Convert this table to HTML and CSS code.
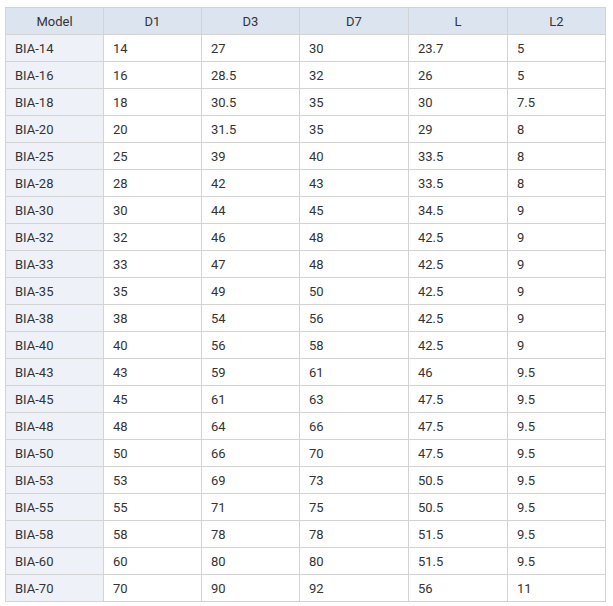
FILE: index.html
```html
<!DOCTYPE html>
<html>
<head>
<meta charset="utf-8">
<link rel="stylesheet" href="styles.css">
</head>
<body>
<table class="spec">
<colgroup>
<col class="c-model"><col class="c-d1"><col class="c-d3"><col class="c-d7"><col class="c-l"><col class="c-l2">
</colgroup>
<thead>
<tr><th>Model</th><th>D1</th><th>D3</th><th>D7</th><th>L</th><th>L2</th></tr>
</thead>
<tbody>
<tr><td>BIA-14</td><td>14</td><td>27</td><td>30</td><td>23.7</td><td>5</td></tr>
<tr><td>BIA-16</td><td>16</td><td>28.5</td><td>32</td><td>26</td><td>5</td></tr>
<tr><td>BIA-18</td><td>18</td><td>30.5</td><td>35</td><td>30</td><td>7.5</td></tr>
<tr><td>BIA-20</td><td>20</td><td>31.5</td><td>35</td><td>29</td><td>8</td></tr>
<tr><td>BIA-25</td><td>25</td><td>39</td><td>40</td><td>33.5</td><td>8</td></tr>
<tr><td>BIA-28</td><td>28</td><td>42</td><td>43</td><td>33.5</td><td>8</td></tr>
<tr><td>BIA-30</td><td>30</td><td>44</td><td>45</td><td>34.5</td><td>9</td></tr>
<tr><td>BIA-32</td><td>32</td><td>46</td><td>48</td><td>42.5</td><td>9</td></tr>
<tr><td>BIA-33</td><td>33</td><td>47</td><td>48</td><td>42.5</td><td>9</td></tr>
<tr><td>BIA-35</td><td>35</td><td>49</td><td>50</td><td>42.5</td><td>9</td></tr>
<tr><td>BIA-38</td><td>38</td><td>54</td><td>56</td><td>42.5</td><td>9</td></tr>
<tr><td>BIA-40</td><td>40</td><td>56</td><td>58</td><td>42.5</td><td>9</td></tr>
<tr><td>BIA-43</td><td>43</td><td>59</td><td>61</td><td>46</td><td>9.5</td></tr>
<tr><td>BIA-45</td><td>45</td><td>61</td><td>63</td><td>47.5</td><td>9.5</td></tr>
<tr><td>BIA-48</td><td>48</td><td>64</td><td>66</td><td>47.5</td><td>9.5</td></tr>
<tr><td>BIA-50</td><td>50</td><td>66</td><td>70</td><td>47.5</td><td>9.5</td></tr>
<tr><td>BIA-53</td><td>53</td><td>69</td><td>73</td><td>50.5</td><td>9.5</td></tr>
<tr><td>BIA-55</td><td>55</td><td>71</td><td>75</td><td>50.5</td><td>9.5</td></tr>
<tr><td>BIA-58</td><td>58</td><td>78</td><td>78</td><td>51.5</td><td>9.5</td></tr>
<tr><td>BIA-60</td><td>60</td><td>80</td><td>80</td><td>51.5</td><td>9.5</td></tr>
<tr><td>BIA-70</td><td>70</td><td>90</td><td>92</td><td>56</td><td>11</td></tr>
</tbody>
</table>
</body>
</html>
```
FILE: styles.css
```css
html, body {
  margin: 0;
  padding: 0;
  background: #fff;
}
body {
  padding: 7px 0 0 5px;
  font-family: Roboto, "Liberation Sans", sans-serif;
  font-size: 13px;
  color: #333;
}
.spec {
  border-collapse: collapse;
  table-layout: fixed;
  width: 600px;
}
.c-model { width: 98px; }
.c-d1 { width: 98px; }
.c-d3 { width: 98px; }
.c-d7 { width: 109px; }
.c-l { width: 99px; }
.c-l2 { width: 98px; }
.spec th,
.spec td {
  border: 1px solid #d3d3d3;
  height: 27px;
  padding: 0 9px;
  box-sizing: border-box;
  line-height: 15px;
}
.spec th {
  background: #dce4f0;
  font-weight: normal;
  text-align: center;
  color: #333;
}
.spec td {
  text-align: left;
}
.spec td:first-child {
  background: #eef2f8;
}
```
